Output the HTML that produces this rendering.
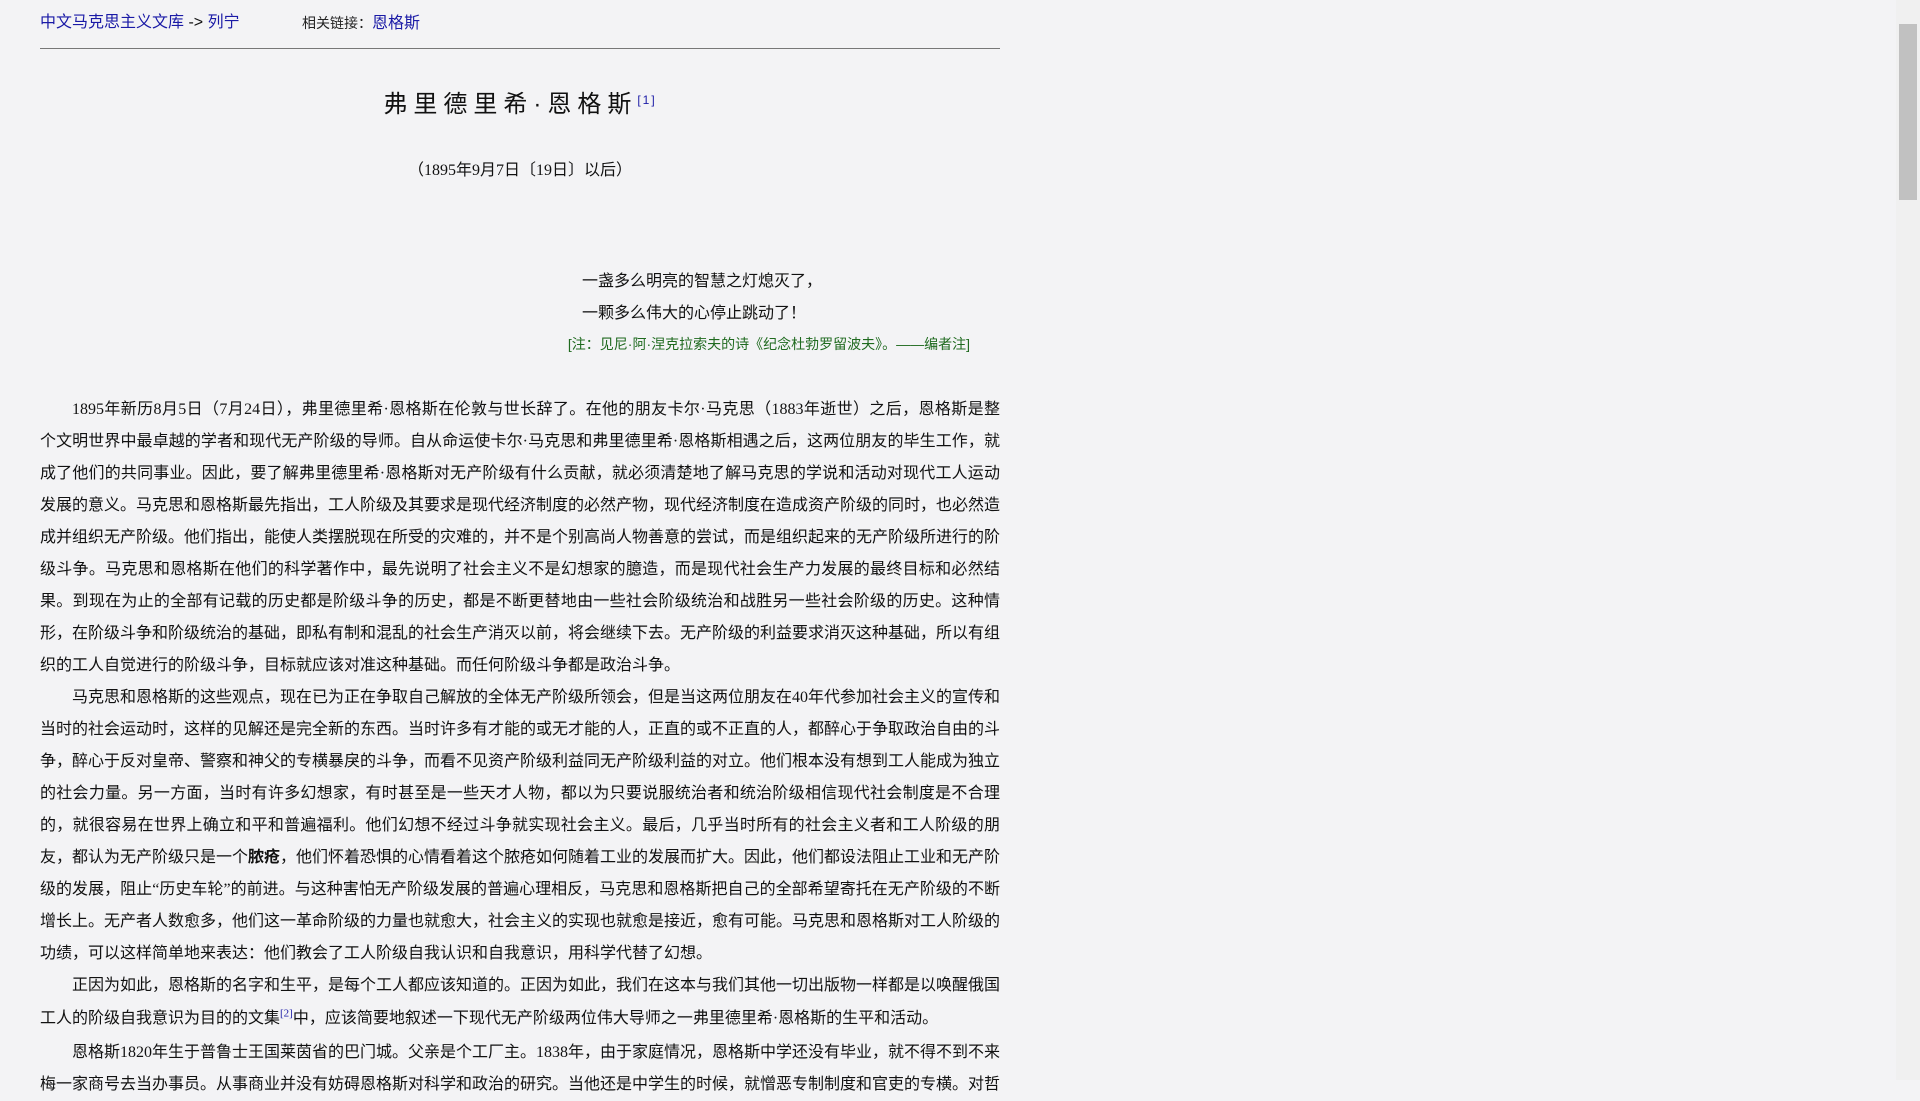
<!DOCTYPE html>
<html><head><meta charset="utf-8">
<style>
html,body{margin:0;padding:0;}
body{width:1920px;height:1080px;overflow:hidden;background:#f3f3f5;font-family:"Liberation Serif","Noto Sans CJK SC",serif;color:#111;position:relative;}
a{color:#1a1aa6;text-decoration:none;}
.top{position:absolute;left:40px;top:12px;font-size:16px;line-height:22px;font-family:"Liberation Sans","Noto Sans CJK SC",sans-serif;}
.top .rel{position:absolute;left:262px;top:0;white-space:nowrap;color:#222;font-size:14px;}
.top .rel a{font-size:16px;}
hr.h{position:absolute;left:40px;top:48px;width:960px;margin:0;border:0;border-top:1px solid #777;}
.title{position:absolute;left:0;width:1040px;top:84px;text-align:center;font-size:24px;letter-spacing:6px;font-family:"Liberation Sans","Noto Sans CJK SC",sans-serif;}
.title sup{font-size:12px;color:#1a1aa6;letter-spacing:2px;vertical-align:8px;}
.date{position:absolute;left:0;width:1040px;top:156px;text-align:center;font-size:16px;}
.poem{position:absolute;left:582px;font-size:16px;line-height:32px;font-family:"Liberation Sans","Noto Sans CJK SC",sans-serif;}
.note{position:absolute;right:950px;top:334px;font-size:14px;color:#1f6a1f;white-space:nowrap;font-family:"Liberation Sans","Noto Sans CJK SC",sans-serif;}
.body{position:absolute;left:40px;top:394px;width:960px;font-size:16px;line-height:32px;}
.l{height:32px;text-align:justify;text-align-last:justify;white-space:nowrap;overflow:hidden;}
.l.e{text-align-last:left;}
.i{padding-left:32px;}
.sb{position:absolute;right:0;top:0;width:24px;height:1080px;background:#f0f0f0;}
.th{position:absolute;right:3px;top:24px;width:18px;height:176px;background:#c1c1c1;}
</style></head><body>
<div class="top"><a>中文马克思主义文库</a> -&gt; <a>列宁</a><span class="rel">相关链接：<a>恩格斯</a></span></div>
<hr class="h">
<div class="title">弗里德里希·恩格斯<sup>[1]</sup></div>
<div class="date">（1895年9月7日〔19日〕以后）</div>
<div class="poem" style="top:266px">一盏多么明亮的智慧之灯熄灭了，</div>
<div class="poem" style="top:298px">一颗多么伟大的心停止跳动了！</div>
<div class="note">[注：见尼·阿·涅克拉索夫的诗《纪念杜勃罗留波夫》。——编者注]</div>
<div class="body">
<div class="l i">1895年新历8月5日（7月24日），弗里德里希·恩格斯在伦敦与世长辞了。在他的朋友卡尔·马克思（1883年逝世）之后，恩格斯是整</div>
<div class="l">个文明世界中最卓越的学者和现代无产阶级的导师。自从命运使卡尔·马克思和弗里德里希·恩格斯相遇之后，这两位朋友的毕生工作，就</div>
<div class="l">成了他们的共同事业。因此，要了解弗里德里希·恩格斯对无产阶级有什么贡献，就必须清楚地了解马克思的学说和活动对现代工人运动</div>
<div class="l">发展的意义。马克思和恩格斯最先指出，工人阶级及其要求是现代经济制度的必然产物，现代经济制度在造成资产阶级的同时，也必然造</div>
<div class="l">成并组织无产阶级。他们指出，能使人类摆脱现在所受的灾难的，并不是个别高尚人物善意的尝试，而是组织起来的无产阶级所进行的阶</div>
<div class="l">级斗争。马克思和恩格斯在他们的科学著作中，最先说明了社会主义不是幻想家的臆造，而是现代社会生产力发展的最终目标和必然结</div>
<div class="l">果。到现在为止的全部有记载的历史都是阶级斗争的历史，都是不断更替地由一些社会阶级统治和战胜另一些社会阶级的历史。这种情</div>
<div class="l">形，在阶级斗争和阶级统治的基础，即私有制和混乱的社会生产消灭以前，将会继续下去。无产阶级的利益要求消灭这种基础，所以有组</div>
<div class="l e">织的工人自觉进行的阶级斗争，目标就应该对准这种基础。而任何阶级斗争都是政治斗争。</div>
<div class="l i">马克思和恩格斯的这些观点，现在已为正在争取自己解放的全体无产阶级所领会，但是当这两位朋友在40年代参加社会主义的宣传和</div>
<div class="l">当时的社会运动时，这样的见解还是完全新的东西。当时许多有才能的或无才能的人，正直的或不正直的人，都醉心于争取政治自由的斗</div>
<div class="l">争，醉心于反对皇帝、警察和神父的专横暴戾的斗争，而看不见资产阶级利益同无产阶级利益的对立。他们根本没有想到工人能成为独立</div>
<div class="l">的社会力量。另一方面，当时有许多幻想家，有时甚至是一些天才人物，都以为只要说服统治者和统治阶级相信现代社会制度是不合理</div>
<div class="l">的，就很容易在世界上确立和平和普遍福利。他们幻想不经过斗争就实现社会主义。最后，几乎当时所有的社会主义者和工人阶级的朋</div>
<div class="l">友，都认为无产阶级只是一个<b>脓疮</b>，他们怀着恐惧的心情看着这个脓疮如何随着工业的发展而扩大。因此，他们都设法阻止工业和无产阶</div>
<div class="l">级的发展，阻止“历史车轮”的前进。与这种害怕无产阶级发展的普遍心理相反，马克思和恩格斯把自己的全部希望寄托在无产阶级的不断</div>
<div class="l">增长上。无产者人数愈多，他们这一革命阶级的力量也就愈大，社会主义的实现也就愈是接近，愈有可能。马克思和恩格斯对工人阶级的</div>
<div class="l e">功绩，可以这样简单地来表达：他们教会了工人阶级自我认识和自我意识，用科学代替了幻想。</div>
<div class="l i">正因为如此，恩格斯的名字和生平，是每个工人都应该知道的。正因为如此，我们在这本与我们其他一切出版物一样都是以唤醒俄国</div>
<div class="l e" style="height:35px;line-height:34px">工人的阶级自我意识为目的的文集<sup style="font-size:11px;color:#1a1aa6;line-height:0">[2]</sup>中，应该简要地叙述一下现代无产阶级两位伟大导师之一弗里德里希·恩格斯的生平和活动。</div>
<div class="l i">恩格斯1820年生于普鲁士王国莱茵省的巴门城。父亲是个工厂主。1838年，由于家庭情况，恩格斯中学还没有毕业，就不得不到不来</div>
<div class="l">梅一家商号去当办事员。从事商业并没有妨碍恩格斯对科学和政治的研究。当他还是中学生的时候，就憎恶专制制度和官吏的专横。对哲</div>
</div>
<div class="sb"><div class="th"></div></div>
</body></html>
